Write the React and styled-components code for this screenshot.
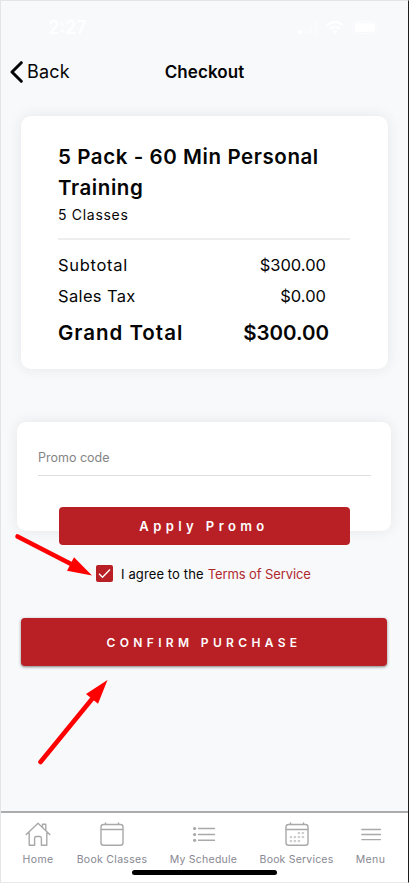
import React from "react";
import styled, { createGlobalStyle } from "styled-components";

const GlobalStyle = createGlobalStyle`
  * { box-sizing: border-box; }
  body { margin: 0; background: #f8f9fb; }
`;

const Screen = styled.main`
  position: relative;
  width: 409px;
  height: 883px;
  overflow: hidden;
  display: flex;
  flex-direction: column;
  background: #f8f9fb;
  border-top: 1px solid #e3e4e6;
  border-left: 1px solid #e3e4e6;
  border-right: 1px solid #1c1c1c;
  border-bottom: 1px solid #e9e9eb;
  font-family: Inter, "Open Sans", sans-serif;
  color: #050505;
`;

const StatusBar = styled.div`
  height: 45px;
  padding: 8px 26px 0 47px;
  display: flex;
  align-items: center;
  justify-content: space-between;
  color: #fff;
  font-size: 18px;
  font-weight: 600;
`;

const NavBar = styled.header`
  height: 51px;
  display: grid;
  grid-template-columns: 120px 1fr 120px;
  align-items: center;
  padding-top: 1px;
`;

const BackButton = styled.button`
  display: flex;
  align-items: center;
  gap: 4px;
  padding: 0 0 0 9px;
  border: 0;
  background: none;
  color: inherit;
  font: 400 18px/24px Inter, sans-serif;
  letter-spacing: 0.2px;
`;

const PageTitle = styled.h1`
  margin: 0;
  text-align: center;
  white-space: nowrap;
  font: 600 17px/24px Inter, sans-serif;
  letter-spacing: 0.1px;
`;

const Card = styled.section`
  background: #fff;
  box-shadow: 0 0 14px rgba(40, 45, 60, 0.09);
`;

const SummaryCard = styled(Card)`
  width: 367px;
  height: 253px;
  margin: 19px 0 0 20px;
  padding: 25px 38px 0 37px;
  border-radius: 10px;
`;

const PackName = styled.h2`
  margin: 0;
  font-size: 20.5px;
  line-height: 31px;
  font-weight: 600;
  letter-spacing: 0.58px;
  white-space: nowrap;
`;

const PackCount = styled.p`
  margin: 0;
  font-size: 14px;
  line-height: 23px;
  letter-spacing: 0.7px;
`;

const Divider = styled.hr`
  height: 2px;
  margin: 12px 0 10px;
  border: 0;
  background: #eeeeef;
`;

const PriceRow = styled.div`
  display: flex;
  justify-content: space-between;
  padding-right: 24px;
  height: 30.5px;
  line-height: 30px;
  font-size: 16.5px;
`;

const TotalRow = styled(PriceRow)`
  margin-top: 5px;
  padding-right: 21px;
  height: 34px;
  line-height: 34px;
  font-size: 20.5px;
  font-weight: 600;
`;

const PriceLabel = styled.span`
  letter-spacing: ${(p) => p.$tracking}px;
`;

const PromoCard = styled(Card)`
  width: 374px;
  height: 109px;
  flex: none;
  margin: 53px 0 0 16px;
  padding: 17px 20px 0 21px;
  border-radius: 9px;
`;

const PromoField = styled.div`
  height: 37px;
  border-bottom: 1px solid #dedede;
  line-height: 37px;
  font-size: 12.5px;
  letter-spacing: 0;
  color: #858585;
`;

const Button = styled.button`
  flex: none;
  border: 0;
  padding: 0;
  border-radius: 4px;
  background: #b92026;
  color: #fff;
  font-family: Inter, sans-serif;
  font-weight: 600;
`;

const ApplyButton = styled(Button)`
  width: 291px;
  height: 38px;
  margin: 31px 0 0 20.5px;
  font-size: 13px;
  letter-spacing: 4.4px;
`;

const ConfirmButton = styled(Button)`
  width: 366px;
  height: 48px;
  margin: 36px 0 0 20px;
  font-size: 12px;
  letter-spacing: 4.35px;
  box-shadow: 0 1px 3px rgba(0, 0, 0, 0.5);
`;

const Agreement = styled.div`
  display: flex;
  align-items: center;
  height: 17px;
  margin: 34px 0 0 95px;
  font-size: 13px;
  letter-spacing: 0.12px;
  white-space: nowrap;
`;

const CheckBox = styled.span`
  display: grid;
  place-items: center;
  width: 17px;
  height: 17px;
  margin-right: 8px;
  border-radius: 2px;
  background: #b92026;
`;

const TermsLink = styled.a`
  color: #b0282e;
  margin-left: 4px;
  letter-spacing: -0.1px;
`;

const TabBar = styled.nav`
  display: flex;
  height: 71px;
  margin-top: auto;
  padding: 8px 5px 0;
  border-top: 2px solid #acacac;
  background: #fff;
`;

const Tab = styled.div`
  width: ${(p) => p.$width}px;
  display: flex;
  flex-direction: column;
  align-items: center;
  gap: 5px;
  color: #878792;
  font-size: 10.5px;
  line-height: 16px;
  letter-spacing: ${(p) => p.$tracking || 0}px;
  white-space: nowrap;
`;

const HomeIndicator = styled.div`
  position: absolute;
  left: 131px;
  bottom: 7px;
  width: 145px;
  height: 5px;
  border-radius: 3px;
  background: #000;
`;

const Annotation = styled.svg`
  position: absolute;
  left: -1px;
  top: -1px;
  pointer-events: none;
`;

const StatusIcons = () => (
  <svg width="84" height="16" viewBox="0 0 84 16" fill="#fff">
    <rect x="0" y="10" width="3.5" height="4" rx="1" />
    <g opacity=".4">
      <rect x="5.5" y="7.5" width="3.5" height="6.5" rx="1" />
      <rect x="11" y="5" width="3.5" height="9" rx="1" />
      <rect x="16.5" y="2" width="3.5" height="12" rx="1" />
    </g>
    <g fill="none" stroke="#fff" strokeWidth="2.2">
      <path d="M29 5.5Q37-1.5 45 5.5" />
      <path d="M32 9Q37 4.5 42 9" />
    </g>
    <path d="m34.3 11 2.7 3 2.7-3q-2.7-2-5.4 0Z" />
    <rect x="55" y="1.5" width="24" height="12" rx="3.5" fill="none" stroke="#fff" opacity=".5" />
    <rect x="57" y="3.2" width="20" height="8.6" rx="2" />
    <path d="M80.5 5.5q2 2 0 4Z" opacity=".5" />
  </svg>
);

const TabIcon = ({ children }) => (
  <svg
    width="26" height="26" viewBox="0 0 26 26" fill="none"
    stroke="#a9a9a9" strokeWidth="1.4" strokeLinecap="round" strokeLinejoin="round"
  >
    {children}
  </svg>
);

const HomeIcon = () => (
  <TabIcon>
    <path d="M1.2 13.5 13 2.2l11.8 11.3M4.2 11.5v12.8h5.4v-7.1q0-1.7 1.7-1.7h3.4q1.7 0 1.7 1.7v7.1h5.4V11.5M17.5 6V3.2h3.3v6" />
  </TabIcon>
);

const CalendarIcon = ({ dots = [] }) => (
  <TabIcon>
    <rect x="2" y="3.5" width="22" height="20.8" rx="2.5" />
    <path d="M2.2 8.5h21.6M6.5 2v1.5M19.5 2v1.5" />
    {dots.map(([x, y]) => (
      <rect key={`${x}-${y}`} x={x} y={y} width="1.2" height="1.2" strokeWidth="0.6" />
    ))}
  </TabIcon>
);

const serviceDots = [
  [14.5, 11.5], [18.5, 11.5],
  [6.5, 15.5], [10.5, 15.5], [14.5, 15.5], [18.5, 15.5],
  [6.5, 19.5], [10.5, 19.5], [14.5, 19.5],
];

const ListIcon = () => (
  <TabIcon>
    <path d="M7.5 7.5h16M7.5 13.5h16M7.5 19.3h16" />
    <g fill="#a9a9a9" stroke="none">
      <circle cx="3.6" cy="7.5" r="1.6" />
      <circle cx="3.6" cy="13.5" r="1.6" />
      <circle cx="3.6" cy="19.3" r="1.6" />
    </g>
  </TabIcon>
);

const MenuIcon = () => (
  <TabIcon>
    <path d="M3.8 8.5h18.6M3.8 13.5h18.6M3.8 18.6h18.6" />
  </TabIcon>
);

export default function App() {
  return (
    <>
      <GlobalStyle />
      <Screen>
        <StatusBar>
          <span>2:27</span>
          <StatusIcons />
        </StatusBar>
        <NavBar>
          <BackButton>
            <svg width="13" height="22" viewBox="0 0 13 22" fill="none">
              <path d="M11.3 1.7 2 11l9.3 9.3" stroke="#050505" strokeWidth="3" strokeLinecap="round" strokeLinejoin="round" />
            </svg>
            Back
          </BackButton>
          <PageTitle>Checkout</PageTitle>
        </NavBar>

        <SummaryCard>
          <PackName>5 Pack - 60 Min Personal<br />Training</PackName>
          <PackCount>5 Classes</PackCount>
          <Divider />
          <PriceRow><PriceLabel $tracking={0.7}>Subtotal</PriceLabel><span>$300.00</span></PriceRow>
          <PriceRow><PriceLabel $tracking={0.35}>Sales Tax</PriceLabel><span>$0.00</span></PriceRow>
          <TotalRow><PriceLabel $tracking={0.98}>Grand Total</PriceLabel><span>$300.00</span></TotalRow>
        </SummaryCard>

        <PromoCard>
          <PromoField>Promo code</PromoField>
          <ApplyButton>Apply Promo</ApplyButton>
        </PromoCard>

        <Agreement>
          <CheckBox>
            <svg width="13" height="11" viewBox="0 0 13 11" fill="none" stroke="#fff" strokeWidth="1.4">
              <path d="m1 5.7 3.5 3.5L12 1.5" />
            </svg>
          </CheckBox>
          I agree to the <TermsLink>Terms of Service</TermsLink>
        </Agreement>

        <ConfirmButton>CONFIRM PURCHASE</ConfirmButton>

        <TabBar>
          <Tab $width={64} $tracking={0.4}><HomeIcon />Home</Tab>
          <Tab $width={84} $tracking={0.3}><CalendarIcon />Book Classes</Tab>
          <Tab $width={99} $tracking={0.25}><ListIcon />My Schedule</Tab>
          <Tab $width={87} $tracking={0.2}><CalendarIcon dots={serviceDots} />Book Services</Tab>
          <Tab $width={61} $tracking={0.4}><MenuIcon />Menu</Tab>
        </TabBar>

        <HomeIndicator />
        <Annotation width="409" height="883" fill="#fe0000">
          <path d="M17.5 536.5 72 564.5" stroke="#fe0000" strokeWidth="4.6" strokeLinecap="round" />
          <path d="m92 575.5-25-4.8 7-13.4Z" />
          <path d="M40.5 762 92 699" stroke="#fe0000" strokeWidth="4.6" strokeLinecap="round" />
          <path d="M107.5 680 86 694l12 9.8Z" />
        </Annotation>
      </Screen>
    </>
  );
}
